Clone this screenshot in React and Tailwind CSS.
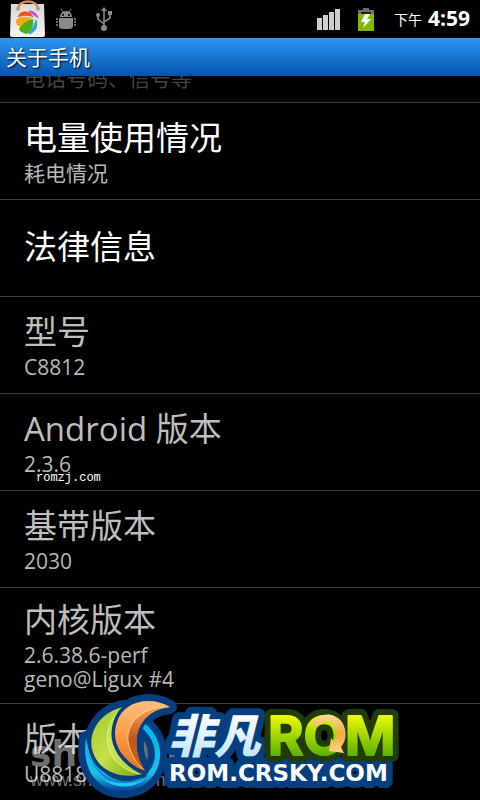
import React from 'react';

const ITEMS = [
  { title: '电量使用情况', lines: ['耗电情况'], enabled: true },
  { title: '法律信息', lines: [], enabled: true },
  { title: '型号', lines: ['C8812'] },
  { title: 'Android 版本', lines: ['2.3.6'], mark: 'romzj.com' },
  { title: '基带版本', lines: ['2030'] },
  { title: '内核版本', lines: ['2.6.38.6-perf', 'geno@Ligux #4'] },
  { title: '版本号', lines: ['U8818'], last: true },
];

// market app notification: paper bag with the coloured wheel
const MarketIcon = () => (
  <svg width="36" height="38" viewBox="0 0 36 38" aria-hidden="true">
    <defs>
      <linearGradient id="bag" x1="0" y1="0" x2="0" y2="1">
        <stop offset="0" stopColor="#d8d8d4" />
        <stop offset="1" stopColor="#f4f4f2" />
      </linearGradient>
    </defs>
    <path d="M1 4H34L35 35Q35 37 33 37H2Q0 37 0 35Z" fill="url(#bag)" />
    <circle cx="8" cy="9" r="2" fill="#aaa" />
    <circle cx="28" cy="9" r="2" fill="#aaa" />
    <path d="M8 9C8 -1 28 -1 28 9" fill="none" stroke="#c98a62" strokeWidth="2.4" />
    <path d="M9 16C11 11 19 11 22 16C17 14 13 15 9 16Z" fill="#f4511e" stroke="#f4511e" strokeWidth="1.5" />
    <path d="M6 22C5 17 15 16 22 18C18 21 14 26 11 27C8 26 6 25 6 22Z" fill="#ffa51a" />
    <path d="M9 29C11 24 18 20 23 19C24 25 22 31 17 34C13 33 10 32 9 29Z" fill="#4bb010" />
    <path d="M26 20C28 26 26 32 19 34C20 31 24 28 26 20Z" fill="#2aa3ee" stroke="#2aa3ee" />
    <path d="M19 11C24 11 27 14 28 18C25 15 22 14 19 11Z" fill="#c04be0" stroke="#c04be0" />
  </svg>
);

const DebugIcon = () => (
  <svg width="20" height="21" viewBox="0 0 20 21" fill="#8a8a8a" aria-hidden="true">
    <path d="M4 8C4 5 6 2 10 2S16 5 16 8Z" />
    <path d="M5 0L8 4M15 0L12 4" stroke="#8a8a8a" strokeWidth="1" />
    <circle cx="7" cy="6" r="1" fill="#000" />
    <circle cx="13" cy="6" r="1" fill="#000" />
    <path d="M3 9H17V17Q17 20 13 20H7Q3 20 3 17Z" />
    <path d="M0 10H2M0 13H2M0 16H2M18 10H20M18 13H20M18 16H20" stroke="#8a8a8a" strokeWidth="1.6" />
  </svg>
);

const UsbIcon = () => (
  <svg width="16" height="24" viewBox="0 0 16 24" fill="#8a8a8a" aria-hidden="true">
    <path d="M8 3V20M2 8V12L8 17M14 7V11L8 15" fill="none" stroke="#8a8a8a" strokeWidth="1.6" />
    <path d="M8 0L11 4H5Z" />
    <circle cx="8" cy="21" r="3" />
    <circle cx="2" cy="8" r="2" />
    <path d="M12 4H16V8H12Z" />
  </svg>
);

const SignalIcon = () => (
  <svg width="23" height="21" viewBox="0 0 23 21" fill="#cfcfcf" aria-hidden="true">
    <path d="M0 9H5V21H0ZM6 6H11V21H6ZM12 3H17V21H12ZM18 0H23V21H18Z" />
  </svg>
);

const BatteryIcon = () => (
  <svg width="16" height="23" viewBox="0 0 16 23" aria-hidden="true">
    <path d="M0 2H5V0H11V2H16V6H0Z" fill="#6e6e6e" />
    <path d="M0 6H2L3 4H13L14 6H16V23H0Z" fill="#84b800" />
    <path d="M3 4H13V6H3Z" fill="#222" />
    <path d="M7 6H12L9 11H13L5 20L7 14H3Z" fill="#fff" />
  </svg>
);

function Row({ title, lines, enabled, mark, last }) {
  return (
    <li
      className={`relative flex flex-col justify-center pt-2.5 pb-3 pl-6 ${
        last ? 'min-h-24' : 'min-h-[97px] border-b border-[#3c3c3c]'
      } ${enabled ? 'text-white' : 'text-[#bebebe]'}`}
    >
      <h2 className="text-[33px] leading-[44px]">{title}</h2>
      {lines.length > 0 && (
        <div className="mt-px text-[21px] leading-6 text-[#b8b8b8]">
          {lines.map((line) => (
            <p key={line}>{line}</p>
          ))}
        </div>
      )}
      {mark && (
        <span className="absolute bottom-1 left-9 font-['Liberation_Mono',monospace] text-[12px] leading-4 text-white">
          {mark}
        </span>
      )}
    </li>
  );
}

const WAVE = 'M86 738C81 770 98 791 122 791C148 791 162 770 160 750C158 737 152 729 144 723L141 727C150 735 155 744 155 754C155 768 146 778 131 781C112 784 92 768 86 738Z';
const LEAF = 'M124 707C101 711 88 732 92 749C97 771 120 780 143 774C119 766 107 735 124 707Z';
const FLAME = 'M170 707C149 695 123 702 117 722C109 745 126 764 145 771C129 747 134 711 170 707Z';

const BrandLogo = () => (
  <svg className="absolute bottom-0 left-[78px]" width="328" height="108" viewBox="78 692 328 108" role="img" aria-label="非凡ROM">
    <defs>
      <linearGradient id="leaf" x1="0" y1="0" x2="1" y2="1">
        <stop offset="0" stopColor="#9ccb2c" />
        <stop offset="0.5" stopColor="#c6e04a" />
        <stop offset="1" stopColor="#6fa80a" />
      </linearGradient>
      <linearGradient id="flame" x1="0" y1="0" x2="0" y2="1">
        <stop offset="0" stopColor="#ffc078" />
        <stop offset="0.5" stopColor="#f79a48" />
        <stop offset="1" stopColor="#e8701c" />
      </linearGradient>
      <linearGradient id="ember" x1="0" y1="0" x2="0" y2="1">
        <stop offset="0" stopColor="#f9a050" />
        <stop offset="0.5" stopColor="#c4561a" />
        <stop offset="1" stopColor="#d8600e" />
      </linearGradient>
      <linearGradient id="wave" x1="0" y1="0" x2="0" y2="1">
        <stop offset="0" stopColor="#00b4ee" />
        <stop offset="0.75" stopColor="#19c1e8" />
        <stop offset="1" stopColor="#0a3fa0" />
      </linearGradient>
      <linearGradient id="ice" x1="0" y1="0" x2="0" y2="1">
        <stop offset="0.2" stopColor="#ffffff" />
        <stop offset="1" stopColor="#b4e0fb" />
      </linearGradient>
      <linearGradient id="lime" gradientUnits="userSpaceOnUse" x1="0" y1="715" x2="0" y2="757">
        <stop offset="0" stopColor="#eefb00" />
        <stop offset="1" stopColor="#56b000" />
      </linearGradient>
      <linearGradient id="gold" x1="0" y1="0" x2="0" y2="1">
        <stop offset="0" stopColor="#fbdc9c" />
        <stop offset="0.5" stopColor="#f4a93a" />
        <stop offset="1" stopColor="#fbd68c" />
      </linearGradient>
    </defs>

    <g fill="#053f80" stroke="#053f80" strokeWidth="14" strokeLinejoin="round">
      <path d={WAVE} />
      <path d={LEAF} />
      <path d={FLAME} />
    </g>
    <path d={WAVE} fill="url(#wave)" />
    <path d="M87 750C95 772 112 784 131 782C140 780 146 777 150 772C140 792 100 792 87 750Z" fill="#0a86d4" />
    <path d="M98 775C112 786 136 785 147 777C135 790 112 790 98 775Z" fill="#22c8ee" />
    <path d={LEAF} fill="url(#leaf)" stroke="#053f80" strokeWidth="7" strokeLinejoin="round" paintOrder="stroke" />
    <path d="M124 707C98 732 104 766 140 774C119 764 107 735 124 707Z" fill="#d9ec72" opacity="0.5" />
    <path d="M119 711C98 733 106 766 139 774" fill="none" stroke="#eef8b0" strokeWidth="0.8" />
    <path d={FLAME} fill="url(#flame)" stroke="#053f80" strokeWidth="7" strokeLinejoin="round" paintOrder="stroke" />
    <path d="M170 707C146 706 126 722 128 741C130 754 137 765 145 771C129 747 134 711 170 707Z" fill="url(#ember)" />
    <path d="M164 707C143 707 126 722 128 741C130 754 137 764 143 769" fill="none" stroke="#ffd9a8" strokeWidth="0.8" />

    <g fill="#053f80" stroke="#053f80" strokeWidth="14" strokeLinejoin="round">
      <text x="168" y="753" fontFamily="Noto Sans CJK SC, sans-serif" fontSize="46" fontWeight="900" fontStyle="italic">非凡</text>
      <text x="169" y="781" fontFamily="DejaVu Sans, sans-serif" fontSize="23" fontWeight="700">ROM.CRSKY.COM</text>
    </g>
    <text x="268" y="755" fontFamily="Inter, sans-serif" fontSize="54" fontWeight="700" fill="#223c06" stroke="#223c06" strokeWidth="14" strokeLinejoin="round">ROM</text>
    <text x="168" y="753" fontFamily="Noto Sans CJK SC, sans-serif" fontSize="46" fontWeight="900" fontStyle="italic" fill="url(#ice)">非凡</text>
    <text x="169" y="781" fontFamily="DejaVu Sans, sans-serif" fontSize="23" fontWeight="700" fill="#fff">ROM.CRSKY.COM</text>
    <text x="268" y="755" fontFamily="Inter, sans-serif" fontSize="54" fontWeight="700" fill="url(#lime)" stroke="url(#lime)" strokeWidth="2" strokeLinejoin="round">ROM</text>
    {/* arrow curling round the O */}
    <path d="M311 725C317 712 334 711 342 722C348 732 346 741 341 747L344 753L329 751L331 738L334 741C338 734 337 728 333 724C328 719 321 721 318 727Z" fill="url(#gold)" />
  </svg>
);

export default function App() {
  return (
    <div className="relative min-h-screen overflow-hidden bg-black font-['Open_Sans','Noto_Sans_CJK_SC',sans-serif]">
      <header>
        <div className="flex h-[38px] items-center justify-between pr-2.5 pl-2.5 text-white">
          <div className="flex items-center gap-2.5">
            <MarketIcon />
            <DebugIcon />
            <div className="pl-2.5"><UsbIcon /></div>
          </div>
          <div className="flex items-center">
            <SignalIcon />
            <div className="pr-5 pl-[18px]"><BatteryIcon /></div>
            <span className="pr-1.5 text-[14px]">下午</span>
            <time className="text-[21px] font-bold">4:59</time>
          </div>
        </div>
        <div className="flex h-[38px] items-center bg-linear-to-b from-[#2f97ee] to-[#0553b0] pl-1.5">
          <h1 className="text-[21px] leading-6 text-white text-shadow-[1px_1px_2px_#000]">关于手机</h1>
        </div>
      </header>

      <main>
        <ul>
          {/* row scrolled half way under the title bar */}
          <li className="flex h-[27px] items-end overflow-hidden border-b border-[#3c3c3c] pb-3 pl-6">
            <p className="text-[21px] leading-6 text-[#444]">电话号码、信号等</p>
          </li>
          {ITEMS.map((item) => (
            <Row key={item.title} {...item} />
          ))}
        </ul>
      </main>

      <div className="absolute bottom-2.5 left-[30px] text-white/45">
        <p className="font-['DejaVu_Sans'] text-[36px] leading-8 font-bold">shendu</p>
        <p className="font-['Liberation_Sans'] text-[18px] leading-5">www.shendu.com</p>
      </div>
      <BrandLogo />
    </div>
  );
}
